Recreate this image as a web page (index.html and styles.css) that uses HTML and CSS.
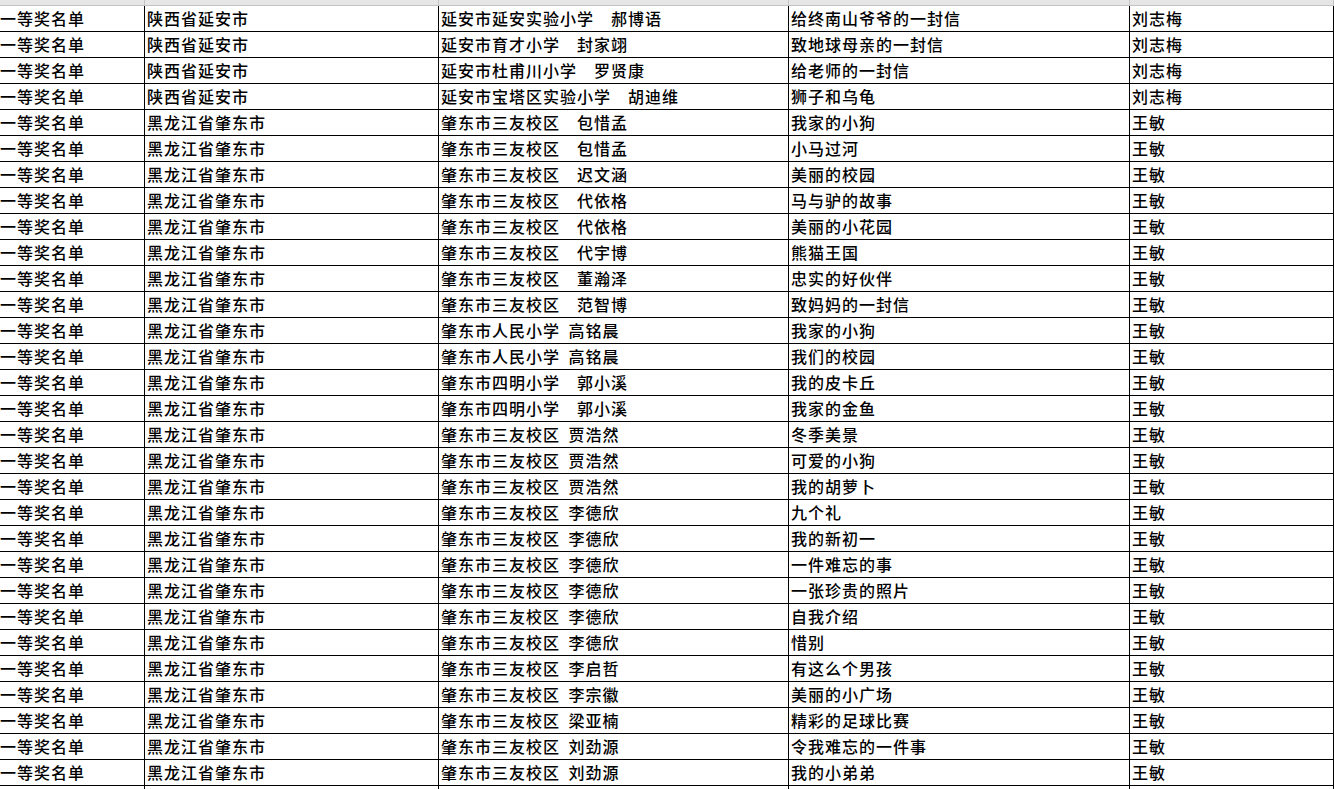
FILE: index.html
```html
<!DOCTYPE html>
<html lang="zh-CN">
<head>
<meta charset="utf-8">
<title>一等奖名单</title>
<link rel="stylesheet" href="styles.css">
</head>
<body>
<div class="sheet">
  <div class="hdr">
    <div class="hc"></div><div class="hc"></div><div class="hc"></div><div class="hc"></div><div class="hc"></div>
  </div>
  <div class="row"><div class="c">一等奖名单</div><div class="c">陕西省延安市</div><div class="c">延安市延安实验小学　郝博语</div><div class="c">给终南山爷爷的一封信</div><div class="c">刘志梅</div></div>
  <div class="row"><div class="c">一等奖名单</div><div class="c">陕西省延安市</div><div class="c">延安市育才小学　封家翊</div><div class="c">致地球母亲的一封信</div><div class="c">刘志梅</div></div>
  <div class="row"><div class="c">一等奖名单</div><div class="c">陕西省延安市</div><div class="c">延安市杜甫川小学　罗贤康</div><div class="c">给老师的一封信</div><div class="c">刘志梅</div></div>
  <div class="row"><div class="c">一等奖名单</div><div class="c">陕西省延安市</div><div class="c">延安市宝塔区实验小学　胡迪维</div><div class="c">狮子和乌龟</div><div class="c">刘志梅</div></div>
  <div class="row"><div class="c">一等奖名单</div><div class="c">黑龙江省肇东市</div><div class="c">肇东市三友校区　包惜孟</div><div class="c">我家的小狗</div><div class="c">王敏</div></div>
  <div class="row"><div class="c">一等奖名单</div><div class="c">黑龙江省肇东市</div><div class="c">肇东市三友校区　包惜孟</div><div class="c">小马过河</div><div class="c">王敏</div></div>
  <div class="row"><div class="c">一等奖名单</div><div class="c">黑龙江省肇东市</div><div class="c">肇东市三友校区　迟文涵</div><div class="c">美丽的校园</div><div class="c">王敏</div></div>
  <div class="row"><div class="c">一等奖名单</div><div class="c">黑龙江省肇东市</div><div class="c">肇东市三友校区　代依格</div><div class="c">马与驴的故事</div><div class="c">王敏</div></div>
  <div class="row"><div class="c">一等奖名单</div><div class="c">黑龙江省肇东市</div><div class="c">肇东市三友校区　代依格</div><div class="c">美丽的小花园</div><div class="c">王敏</div></div>
  <div class="row"><div class="c">一等奖名单</div><div class="c">黑龙江省肇东市</div><div class="c">肇东市三友校区　代宇博</div><div class="c">熊猫王国</div><div class="c">王敏</div></div>
  <div class="row"><div class="c">一等奖名单</div><div class="c">黑龙江省肇东市</div><div class="c">肇东市三友校区　董瀚泽</div><div class="c">忠实的好伙伴</div><div class="c">王敏</div></div>
  <div class="row"><div class="c">一等奖名单</div><div class="c">黑龙江省肇东市</div><div class="c">肇东市三友校区　范智博</div><div class="c">致妈妈的一封信</div><div class="c">王敏</div></div>
  <div class="row"><div class="c">一等奖名单</div><div class="c">黑龙江省肇东市</div><div class="c">肇东市人民小学 高铭晨</div><div class="c">我家的小狗</div><div class="c">王敏</div></div>
  <div class="row"><div class="c">一等奖名单</div><div class="c">黑龙江省肇东市</div><div class="c">肇东市人民小学 高铭晨</div><div class="c">我们的校园</div><div class="c">王敏</div></div>
  <div class="row"><div class="c">一等奖名单</div><div class="c">黑龙江省肇东市</div><div class="c">肇东市四明小学　郭小溪</div><div class="c">我的皮卡丘</div><div class="c">王敏</div></div>
  <div class="row"><div class="c">一等奖名单</div><div class="c">黑龙江省肇东市</div><div class="c">肇东市四明小学　郭小溪</div><div class="c">我家的金鱼</div><div class="c">王敏</div></div>
  <div class="row"><div class="c">一等奖名单</div><div class="c">黑龙江省肇东市</div><div class="c">肇东市三友校区 贾浩然</div><div class="c">冬季美景</div><div class="c">王敏</div></div>
  <div class="row"><div class="c">一等奖名单</div><div class="c">黑龙江省肇东市</div><div class="c">肇东市三友校区 贾浩然</div><div class="c">可爱的小狗</div><div class="c">王敏</div></div>
  <div class="row"><div class="c">一等奖名单</div><div class="c">黑龙江省肇东市</div><div class="c">肇东市三友校区 贾浩然</div><div class="c">我的胡萝卜</div><div class="c">王敏</div></div>
  <div class="row"><div class="c">一等奖名单</div><div class="c">黑龙江省肇东市</div><div class="c">肇东市三友校区 李德欣</div><div class="c">九个礼</div><div class="c">王敏</div></div>
  <div class="row"><div class="c">一等奖名单</div><div class="c">黑龙江省肇东市</div><div class="c">肇东市三友校区 李德欣</div><div class="c">我的新初一</div><div class="c">王敏</div></div>
  <div class="row"><div class="c">一等奖名单</div><div class="c">黑龙江省肇东市</div><div class="c">肇东市三友校区 李德欣</div><div class="c">一件难忘的事</div><div class="c">王敏</div></div>
  <div class="row"><div class="c">一等奖名单</div><div class="c">黑龙江省肇东市</div><div class="c">肇东市三友校区 李德欣</div><div class="c">一张珍贵的照片</div><div class="c">王敏</div></div>
  <div class="row"><div class="c">一等奖名单</div><div class="c">黑龙江省肇东市</div><div class="c">肇东市三友校区 李德欣</div><div class="c">自我介绍</div><div class="c">王敏</div></div>
  <div class="row"><div class="c">一等奖名单</div><div class="c">黑龙江省肇东市</div><div class="c">肇东市三友校区 李德欣</div><div class="c">惜别</div><div class="c">王敏</div></div>
  <div class="row"><div class="c">一等奖名单</div><div class="c">黑龙江省肇东市</div><div class="c">肇东市三友校区 李启哲</div><div class="c">有这么个男孩</div><div class="c">王敏</div></div>
  <div class="row"><div class="c">一等奖名单</div><div class="c">黑龙江省肇东市</div><div class="c">肇东市三友校区 李宗徽</div><div class="c">美丽的小广场</div><div class="c">王敏</div></div>
  <div class="row"><div class="c">一等奖名单</div><div class="c">黑龙江省肇东市</div><div class="c">肇东市三友校区 梁亚楠</div><div class="c">精彩的足球比赛</div><div class="c">王敏</div></div>
  <div class="row"><div class="c">一等奖名单</div><div class="c">黑龙江省肇东市</div><div class="c">肇东市三友校区 刘劲源</div><div class="c">令我难忘的一件事</div><div class="c">王敏</div></div>
  <div class="row"><div class="c">一等奖名单</div><div class="c">黑龙江省肇东市</div><div class="c">肇东市三友校区 刘劲源</div><div class="c">我的小弟弟</div><div class="c">王敏</div></div>
  <div class="row"><div class="c"></div><div class="c"></div><div class="c"></div><div class="c"></div><div class="c"></div></div>
</div>
</body>
</html>
```

FILE: styles.css
```css
html, body {
  margin: 0;
  padding: 0;
  background: #ffffff;
  overflow: hidden;
}

.sheet {
  width: 1334px;
  font-family: "Noto Sans CJK SC", "Noto Sans", sans-serif;
  font-size: 16px;
  font-weight: 500;
  color: #000;
  letter-spacing: 1px;
  word-spacing: 4px;
}

.hdr,
.row {
  display: grid;
  grid-template-columns: 145px 294px 350px 341px 1fr;
}

.hdr {
  height: 6px;
  box-sizing: border-box;
  background: #e6e6e6;
  border-bottom: 1px solid #c4c4c4;
}

.hc {
  box-sizing: border-box;
  border-right: 1px solid #c4c4c4;
}

.row {
  height: 26px;
  box-sizing: border-box;
  border-bottom: 1px solid #000;
}

.c {
  box-sizing: border-box;
  border-right: 1px solid #000;
  padding: 0 0 0 2px;
  line-height: 25px;
  white-space: pre;
  overflow: hidden;
}

.c:first-child {
  padding-left: 0;
}
```
